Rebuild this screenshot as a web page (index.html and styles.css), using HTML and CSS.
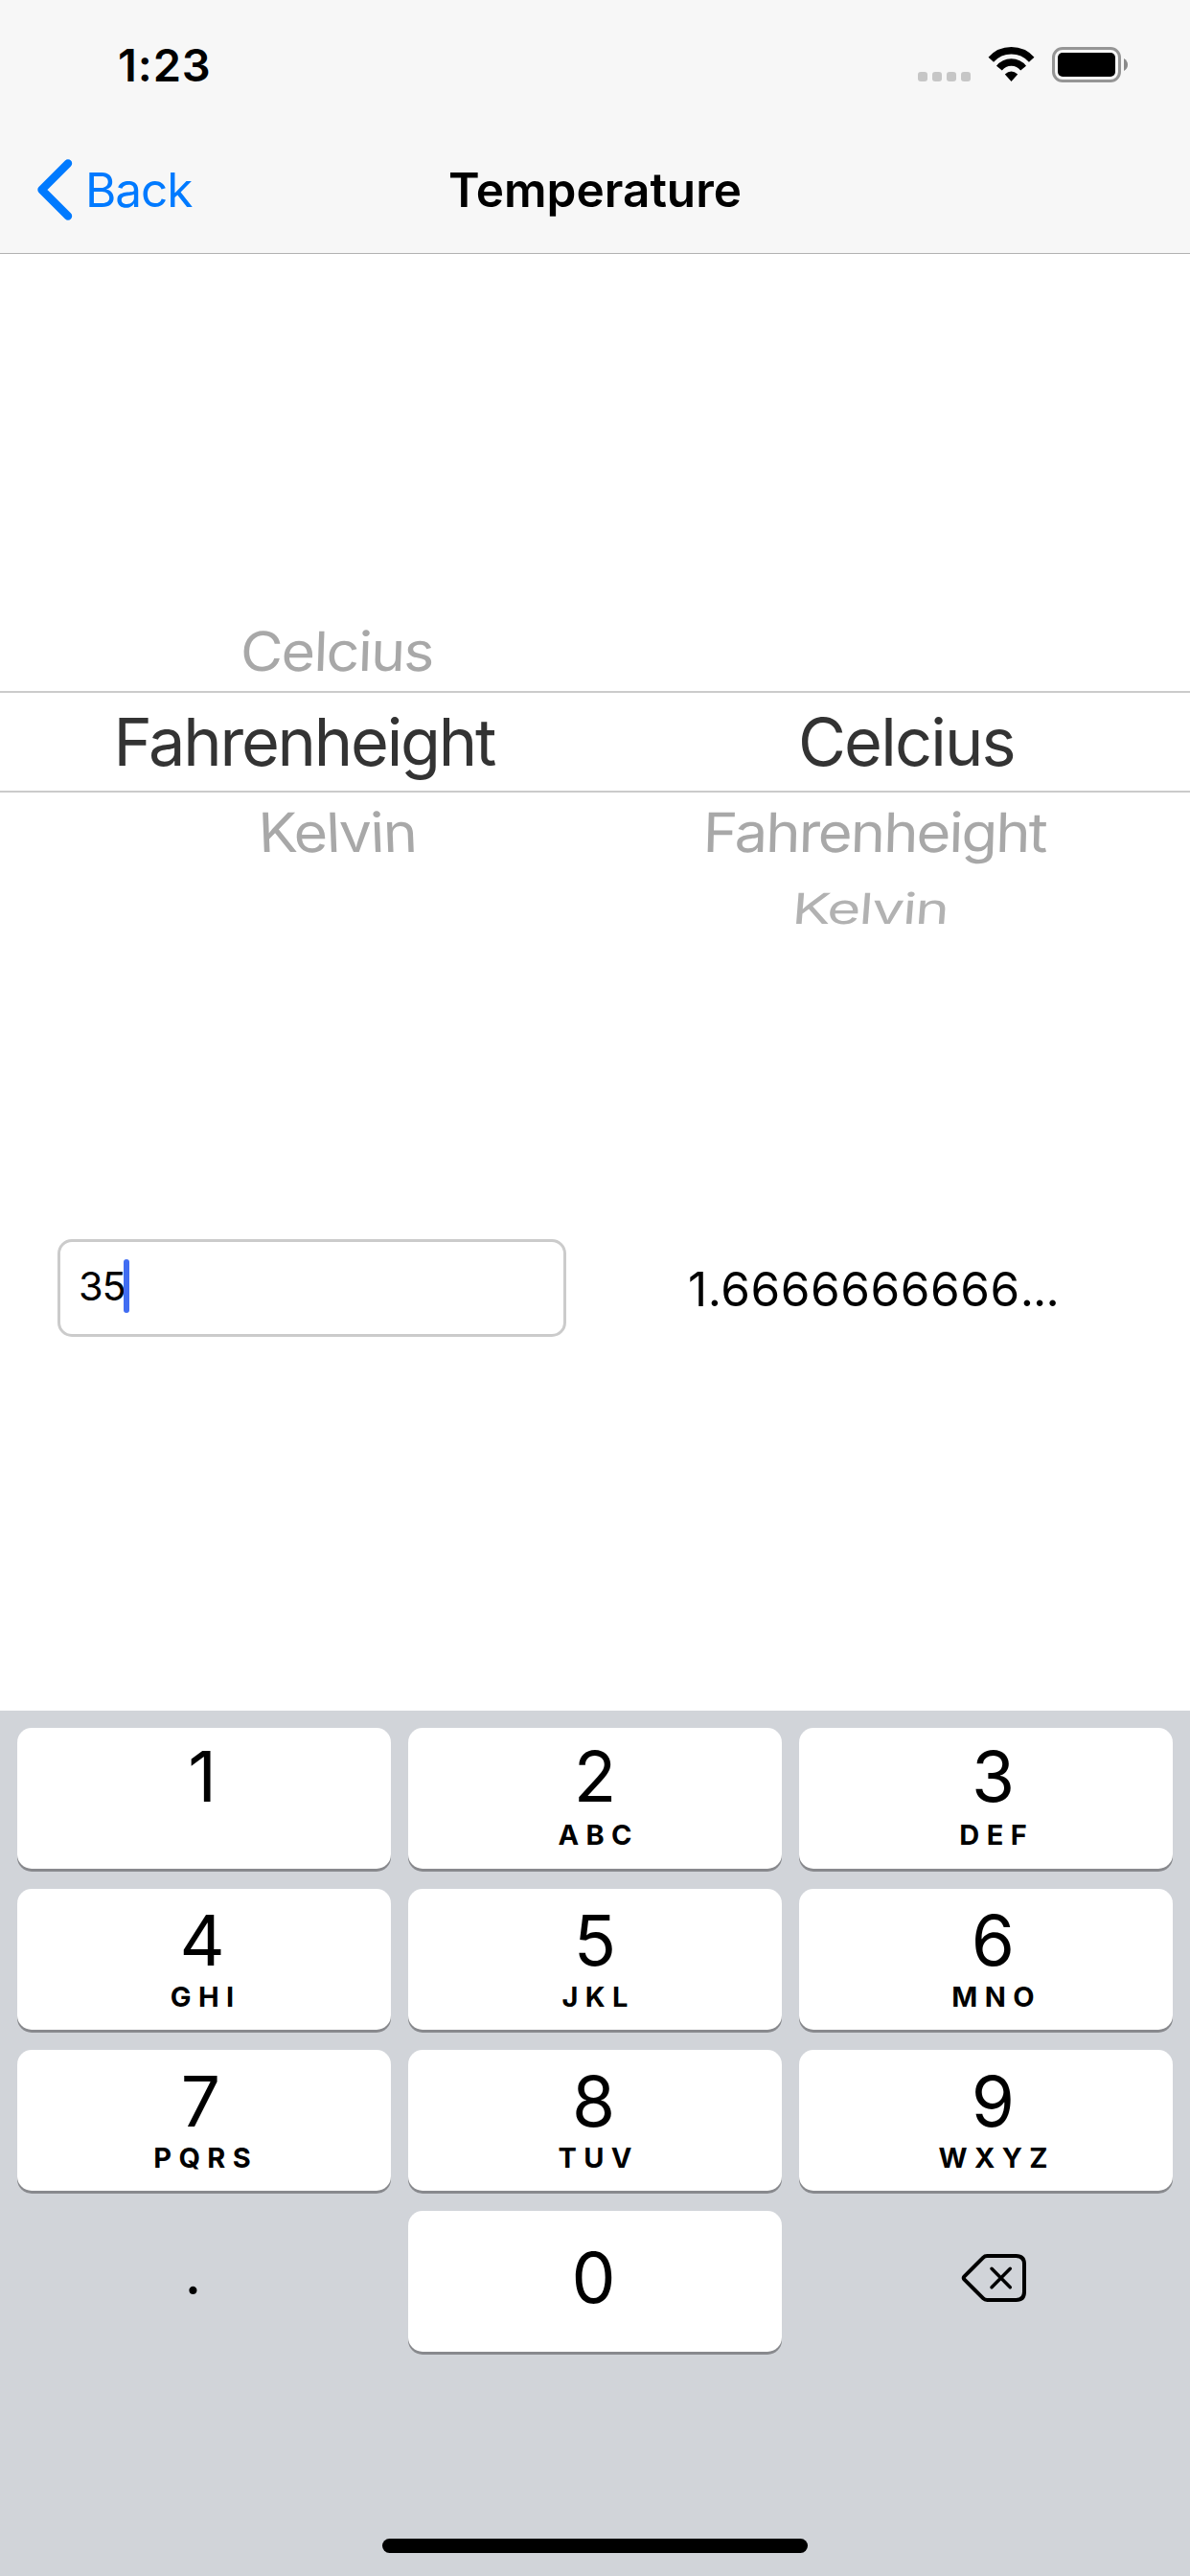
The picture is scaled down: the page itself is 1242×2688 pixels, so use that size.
FILE: index.html
```html
<!DOCTYPE html>
<html lang="en">
<head>
<meta charset="utf-8">
<title>Temperature</title>
<link rel="stylesheet" href="styles.css">
</head>
<body>
<div class="screen">
  <header class="header">
    <div class="status">
      <span class="clock">1:23</span>
      <svg class="indicators" width="222" height="40" viewBox="956 48 222 40" aria-hidden="true">
        <g fill="#c6c6c6">
          <rect x="958" y="75" width="10" height="10" rx="3"/>
          <rect x="973" y="75" width="10" height="10" rx="3"/>
          <rect x="988" y="75" width="10" height="10" rx="3"/>
          <rect x="1003" y="75" width="10" height="10" rx="3"/>
        </g>
        <g fill="none" stroke="#000" stroke-width="7.4">
          <path d="M1034.3 62.2A28.5 28.5 0 0 1 1076.7 62.2"/>
          <path d="M1042.9 71.1A16 16 0 0 1 1068.1 71.1"/>
        </g>
        <path d="M1055.5 85L1048.8 77.6Q1055.500 71.200 1062.2 77.6Z"/>
        <rect x="1099.500" y="50.500" width="69" height="34" rx="9.500" fill="none" stroke="#959595" stroke-width="3"/>
        <rect x="1104" y="55" width="60" height="25" rx="5"/>
        <path d="M1173 61Q1177 63.500 1177 67.500T1173 74Z" fill="#8a8a8a"/>
      </svg>
    </div>
    <nav class="nav">
      <a class="back">
        <svg width="38" height="64" viewBox="0 0 38 64" aria-hidden="true"><path d="M33 4.500L5.500 32L33 59.500" fill="none" stroke="#007aff" stroke-width="8.400" stroke-linecap="round" stroke-linejoin="round"/></svg>
        <span>Back</span>
      </a>
      <h1 class="title">Temperature</h1>
    </nav>
  </header>

  <main class="content">
    <div class="picker">
      <div class="row row-above">
        <span class="option from-above">Celcius</span>
        <span></span>
      </div>
      <div class="row row-selected">
        <span class="option from-selected">Fahrenheight</span>
        <span class="option to-selected">Celcius</span>
      </div>
      <div class="row row-below">
        <span class="option from-below">Kelvin</span>
        <span class="option to-below">Fahrenheight</span>
      </div>
      <div class="row row-far">
        <span></span>
        <span class="option to-far">Kelvin</span>
      </div>
    </div>

    <div class="conversion">
      <div class="field"><span class="value">35</span><span class="caret"></span></div>
      <span class="result">1.6666666666<span class="dots">...</span></span>
    </div>
  </main>

  <section class="keyboard">
    <div class="keys">
      <div class="key first-row left"><span class="digit">1</span></div>
      <div class="key first-row"><span class="digit">2</span><span class="letters">ABC</span></div>
      <div class="key first-row right"><span class="digit">3</span><span class="letters">DEF</span></div>
      <div class="key left"><span class="digit">4</span><span class="letters">GHI</span></div>
      <div class="key"><span class="digit">5</span><span class="letters">JKL</span></div>
      <div class="key right"><span class="digit">6</span><span class="letters">MNO</span></div>
      <div class="key left"><span class="digit lean">7</span><span class="letters">PQRS</span></div>
      <div class="key"><span class="digit lean">8</span><span class="letters">TUV</span></div>
      <div class="key right"><span class="digit">9</span><span class="letters">WXYZ</span></div>
      <div class="key plain point">.</div>
      <div class="key zero"><span class="digit lean">0</span></div>
      <div class="key plain erase">
        <svg width="70" height="52" viewBox="0 0 70 52" aria-hidden="true">
          <g fill="none" stroke="#000" stroke-linecap="round" stroke-linejoin="round">
            <path stroke-width="4" d="M4.500 24.300L24 4.800Q25.800 3 28.300 3H58.500Q67 3 67 11.500V40.500Q67 49 58.500 49H28.300Q25.800 49 24 47.200L4.500 27.700Q3 26 4.500 24.300Z"/>
            <path stroke-width="3.500" d="M33 16.300L52.300 35.700M52.300 16.300L33 35.700"/>
          </g>
        </svg>
      </div>
    </div>
    <div class="home-indicator"></div>
  </section>
</div>
</body>
</html>
```
FILE: styles.css
```css
* { box-sizing: border-box; }

body {
  margin: 0;
  background: #fff;
  color: #000;
  font-family: Inter, "Liberation Sans", sans-serif;
}

.screen {
  display: flex;
  flex-direction: column;
  width: 1242px;
  height: 2688px;
  overflow: hidden;
}

/* Status bar and navigation */
.header {
  height: 265px;
  background: #f7f7f7;
  border-bottom: 1px solid #b2b2b2;
}

.status {
  display: flex;
  justify-content: space-between;
  align-items: center;
  height: 132px;
  padding: 4px 64px 0 123px;
}

.clock {
  padding-bottom: 2px;
  font-size: 47px;
  font-weight: 600;
  letter-spacing: 0.9px;
}

.nav {
  display: grid;
  grid-template-columns: 1fr auto 1fr;
  align-items: center;
  height: 132px;
}

.back {
  display: flex;
  align-items: center;
  gap: 13px;
  padding-left: 38px;
  color: #007aff;
  font-size: 49.5px;
  letter-spacing: -1.1px;
}

.title {
  margin: 0;
  font-size: 49.5px;
  font-weight: 600;
}

/* Unit picker */
.content {
  height: 1520px;
  padding-top: 373px;
}

.row {
  display: grid;
  grid-template-columns: 1fr 1fr;
  align-items: center;
  justify-items: center;
}

.row-above { height: 83px; }

.row-selected {
  height: 106px;
  border-top: 2px solid #cbcbcb;
  border-bottom: 2px solid #cbcbcb;
}

.row-below { height: 82px; }
.row-far { height: 79px; }

.option {
  color: #a8a8a8;
  font-size: 68.4px;
  line-height: 79px;
  letter-spacing: -1.8px;
  margin-right: -1.8px;
}

.row-selected .option { color: #333; }

.from-selected, .to-below { letter-spacing: -2.2px; }
.from-selected { transform: translateX(6px); }
.to-selected { transform: translateX(13.5px); }
.from-above { transform: translateX(40.5px) skewX(-2deg) scale(0.89, 0.83); }
.from-below { transform: translateX(40.5px) skewX(2.2deg) scale(0.89, 0.83); }
.to-below { transform: translateX(-20px) skewX(-1.6deg) scale(0.9, 0.83); }
.option.to-far {
  color: #b2b2b2;
  transform: translateX(-24px) skewX(-4.5deg) scale(0.88, 0.65);
}

/* Input and converted value */
.conversion {
  display: flex;
  align-items: center;
  gap: 127px;
  margin-top: 305px;
  padding-left: 60px;
}

.field {
  display: flex;
  align-items: center;
  width: 531px;
  height: 102px;
  padding: 0 19px 4px;
  border: 3px solid #cbcbcb;
  border-radius: 15px;
  font-size: 41.5px;
}

.value {
  width: 47px;
  letter-spacing: -1.2px;
}

.caret {
  width: 6px;
  height: 56px;
  border-radius: 3px;
  background: #416df2;
}

.result {
  padding-top: 2px;
  font-size: 49.5px;
  letter-spacing: 0.55px;
}

.dots { letter-spacing: -0.9px; }

/* Number pad */
.keyboard {
  display: flex;
  flex-direction: column;
  align-items: center;
  justify-content: space-between;
  height: 903px;
  padding: 18px 18px 24px;
  background: #d1d4d9;
}

.keys {
  display: grid;
  grid-template-columns: repeat(3, 390px);
  grid-auto-rows: 147px;
  gap: 21px 18px;
}

.key {
  display: flex;
  flex-direction: column;
  align-items: center;
  padding-top: 14px;
  border-radius: 15px;
  background: #fff;
  box-shadow: 0 3px 0 #88898d;
}

.key.left { padding-right: 4px; }
.key.right { padding-left: 15px; }
.key.first-row { padding-top: 11px; }

.digit {
  font-size: 73px;
  line-height: 79px;
}

.digit.lean { padding-right: 3px; }

.letters {
  margin: 2px -7.4px 0 0;
  font-size: 29px;
  font-weight: 700;
  line-height: 36px;
  letter-spacing: 7.4px;
}

.first-row .letters { margin-top: 4px; }

.key.zero { padding-top: 30px; }

.key.plain {
  background: none;
  box-shadow: none;
}

.key.point {
  padding: 25px 23px 0 0;
  font-size: 62px;
  line-height: 80px;
}

.key.erase {
  justify-content: center;
  padding: 0 0 7px 16px;
}

.home-indicator {
  width: 444px;
  height: 15px;
  border-radius: 8px;
  background: #000;
}
```
